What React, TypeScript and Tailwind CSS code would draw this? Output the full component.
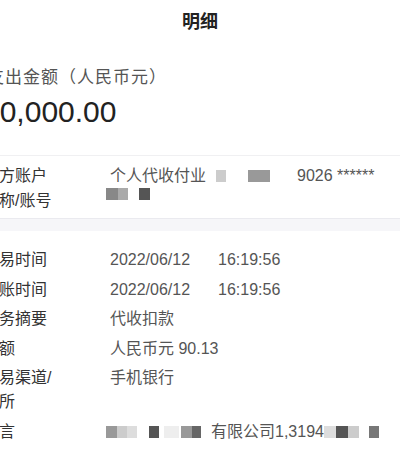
const font = "font-['Liberation_Sans','Noto_Sans_CJK_SC',sans-serif]"

function Blur({ w, c }: { w: string; c: string }) {
  return <span className={`inline-block h-[12px] align-middle blur-[0.6px] ${w} ${c}`}></span>
}

const rows = [
  { label: ["交易时间"], value: <><span className="inline-block w-[108px]">2022/06/12</span>16:19:56</> },
  { label: ["记账时间"], value: <><span className="inline-block w-[108px]">2022/06/12</span>16:19:56</> },
  { label: ["业务摘要"], value: <>代收扣款</> },
  { label: ["金额"], value: <>人民币元 90.13</> },
  { label: ["交易渠道/", "场所"], value: <>手机银行</> },
  {
    label: ["附言"],
    value: (
      <span className="flex items-center">
        <span className="-ml-[4px] flex items-center">
          <Blur w="w-[11px]" c="bg-[#999]" />
          <Blur w="w-[10px]" c="bg-[#ccc]" />
          <Blur w="w-[10px]" c="bg-[#ddd]" />
          <span className="w-[12px]"></span>
          <Blur w="w-[10px]" c="bg-[#555]" />
          <span className="w-[5px]"></span>
          <Blur w="w-[15px]" c="bg-[#eee]" />
          <span className="w-[2px]"></span>
          <Blur w="w-[11px]" c="bg-[#999]" />
          <Blur w="w-[9px]" c="bg-[#666]" />
        </span>
        <span className="ml-[10px]">有限公司1,3194</span>
        <Blur w="w-[12px]" c="bg-[#ddd]" />
        <Blur w="w-[12px]" c="bg-[#555]" />
        <Blur w="w-[11px]" c="bg-[#ccc]" />
        <span className="w-[10px]"></span>
        <Blur w="w-[10px]" c="bg-[#777]" />
      </span>
    ),
  },
]

export default function App() {
  return (
    <div className={`w-[400px] h-[464px] overflow-hidden bg-white ${font}`}>
      <div className="h-[44px] flex items-center justify-center text-[18px] font-semibold text-[#222]">
        明细
      </div>

      <div className="pt-[22px] pb-[25px] border-b border-[#f0f0f2]">
        <div className="-ml-[13px] text-[17px] tracking-[1px] leading-[24px] text-[#555] whitespace-nowrap">
          支出金额（人民币元）
        </div>
        <div className="-ml-[17px] mt-[4px] text-[30px] leading-[36px] text-[#222]">10,000.00</div>
      </div>

      <div className="flex pt-[7px] pb-[5px] text-[16px] leading-[25px] whitespace-nowrap">
        <div className="-ml-[17px] w-[127px] shrink-0 text-[#333]">
          <div>对方账户</div>
          <div>名称/账号</div>
        </div>
        <div className="text-[#555]">
          <div className="flex items-center">
            <span>个人代收付业</span>
            <span className="w-[10px]"></span>
            <Blur w="w-[10px]" c="bg-[#ccc]" />
            <span className="w-[22px]"></span>
            <Blur w="w-[22px]" c="bg-[#999]" />
            <span className="ml-[27px]">9026 ******</span>
          </div>
          <div className="flex items-center -ml-[4px]">
            <Blur w="w-[12px]" c="bg-[#888]" />
            <Blur w="w-[10px]" c="bg-[#aaa]" />
            <span className="w-[11px]"></span>
            <Blur w="w-[11px]" c="bg-[#555]" />
          </div>
        </div>
      </div>

      <div className="h-[13px] border-t border-[#eaeaef] bg-[#f6f6f9]"></div>

      <div className="pt-[17px] flex flex-col gap-[5.5px] text-[16px] leading-[24px] whitespace-nowrap">
        {rows.map((row, i) => (
          <div key={i} className="flex">
            <div className="-ml-[17px] w-[127px] shrink-0 text-[#333]">
              {row.label.map((l, j) => (
                <div key={j}>{l}</div>
              ))}
            </div>
            <div className="text-[#555]">{row.value}</div>
          </div>
        ))}
      </div>
    </div>
  )
}
